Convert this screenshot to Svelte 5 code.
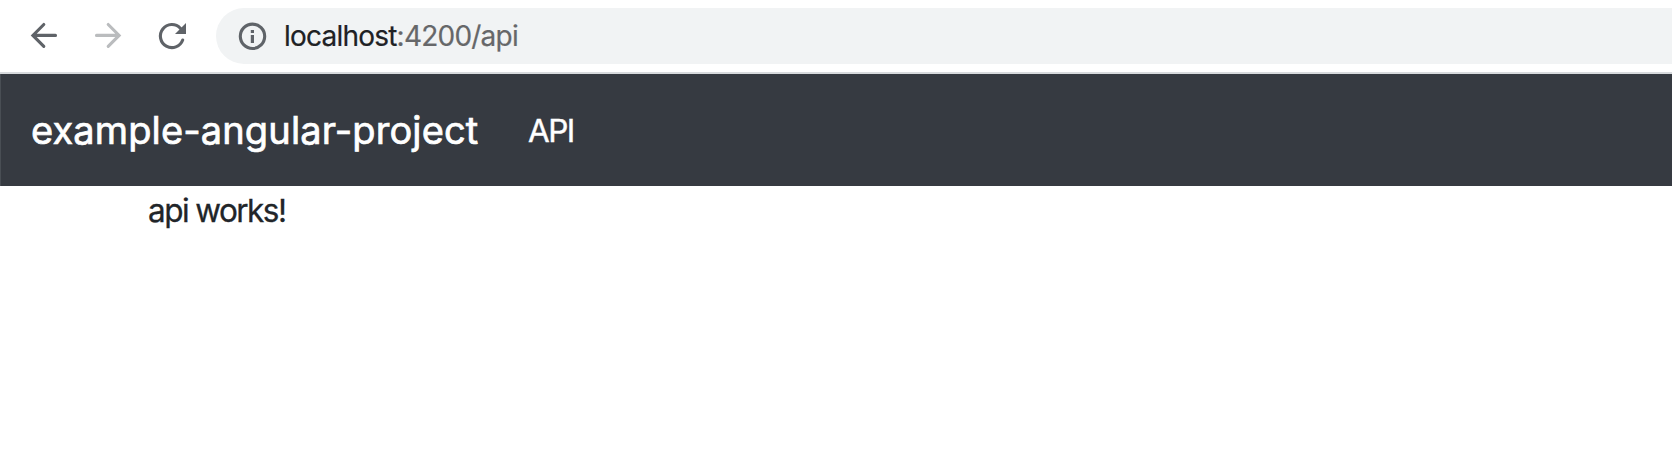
<script>
  const host = 'localhost';
  const rest = ':4200/api';
</script>

<div class="window">
  <header class="toolbar">
    <svg class="back" width="30" height="30" viewBox="0 0 30 30"><path d="M26.500 14.400H4.200M14.800 3.500L3.900 14.400l10.900 10.900" /></svg>
    <svg class="forward" width="30" height="30" viewBox="0 0 30 30"><path d="M3.500 14.400h22.300M15.200 3.500l10.900 10.900-10.900 10.900" /></svg>
    <svg class="reload" width="30" height="30" viewBox="0 0 30 30"><path d="M25.700 19A11.500 11.500 0 1 1 23.300 7.200L25 9" /><path class="head" d="M29 2v11H18z" /></svg>
    <div class="address">
      <svg class="info" width="30" height="30" viewBox="0 0 30 30"><circle cx="15.500" cy="15.300" r="12.200" /><path class="i" d="M15.400 14v8M15.400 9v3" /></svg>
      <span class="url"><b>{host}</b>{rest}</span>
    </div>
  </header>
  <nav>
    <a class="brand" href="#/">example-angular-project</a>
    <a class="link" href="#/api">API</a>
  </nav>
  <main><p>api works!</p></main>
</div>

<style>
  :global(body) { margin: 0; background: #fff; overflow: hidden; }
  .window { height: 468px; font-family: Inter, "Liberation Sans", sans-serif; color: #212529; }
  .toolbar { box-sizing: border-box; height: 74px; display: flex; align-items: center; padding-left: 29px; border-bottom: 2px solid #d7dadd; }
  svg { flex: none; fill: none; stroke: #5f6368; stroke-width: 3.100; stroke-linecap: round; }
  .forward { margin-left: 34px; stroke: #babcbe; }
  .reload { margin-left: 34px; }
  .head { fill: #5f6368; stroke: none; }
  .i { stroke-width: 3.200; stroke-linecap: butt; }
  .address { flex: 1; margin-left: 29px; height: 56px; border-radius: 28px 0 0 28px; background: #f1f3f4; display: flex; align-items: center; padding-left: 21px; }
  .url { margin-left: 17px; font-size: 28px; letter-spacing: -0.780px; color: #666769; -webkit-text-stroke: 0.200px currentColor; }
  b { font-weight: 400; color: #202124; }
  nav { box-sizing: border-box; height: 112px; background: #363a41; border-left: 1px solid #494e54; display: flex; align-items: center; padding-left: 30px; }
  a { color: #fff; text-decoration: none; white-space: nowrap; }
  .brand { width: 497px; font-size: 38px; letter-spacing: 0.130px; -webkit-text-stroke: 0.700px currentColor; }
  .link { padding-top: 1px; font-size: 31.500px; letter-spacing: -1.500px; -webkit-text-stroke: 0.400px currentColor; }
  main { padding: 1px 0 0 148px; }
  p { margin: 0; font-size: 31.500px; line-height: 48px; letter-spacing: -1.550px; -webkit-text-stroke: 0.300px currentColor; }
</style>
